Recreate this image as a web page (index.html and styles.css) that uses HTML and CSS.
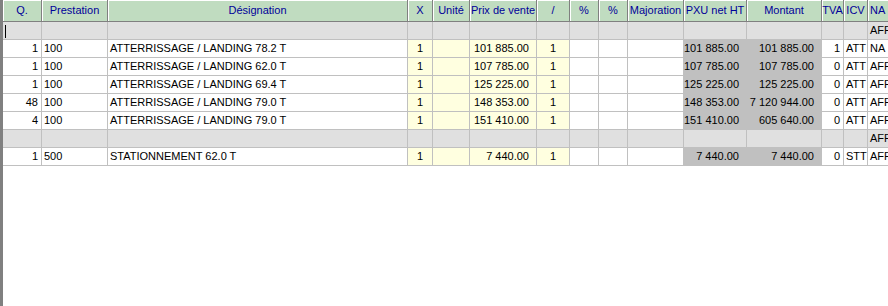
FILE: index.html
```html
<!DOCTYPE html>
<html lang="fr">
<head>
<meta charset="utf-8">
<title>Lignes de facture</title>
<link rel="stylesheet" href="styles.css">
</head>
<body>
<div class="frame">
  <div class="grid">
    <div class="row head">
      <div class="hd">Q.</div>
      <div class="hd">Prestation</div>
      <div class="hd">Désignation</div>
      <div class="hd">X</div>
      <div class="hd">Unité</div>
      <div class="hd">Prix de vente</div>
      <div class="hd">/</div>
      <div class="hd">%</div>
      <div class="hd">%</div>
      <div class="hd">Majoration</div>
      <div class="hd">PXU net HT</div>
      <div class="hd">Montant</div>
      <div class="hd">TVA</div>
      <div class="hd">ICV</div>
      <div class="hd hl">NA</div>
    </div>

    <div class="row sep">
      <div class="c"><span class="caret"></span></div>
      <div class="c"></div><div class="c"></div><div class="c"></div><div class="c"></div>
      <div class="c"></div><div class="c"></div><div class="c"></div><div class="c"></div>
      <div class="c"></div><div class="c"></div><div class="c"></div><div class="c"></div>
      <div class="c"></div><div class="c l">AFF</div>
    </div>

    <div class="row">
      <div class="c r">1</div><div class="c l">100</div><div class="c l">ATTERRISSAGE / LANDING 78.2 T</div>
      <div class="c y m">1</div><div class="c y"></div><div class="c y n">101 885.00</div><div class="c y m">1</div>
      <div class="c"></div><div class="c"></div><div class="c"></div>
      <div class="c g n">101 885.00</div><div class="c g n">101 885.00</div>
      <div class="c r">1</div><div class="c l">ATT</div><div class="c l">NA</div>
    </div>

    <div class="row">
      <div class="c r">1</div><div class="c l">100</div><div class="c l">ATTERRISSAGE / LANDING 62.0 T</div>
      <div class="c y m">1</div><div class="c y"></div><div class="c y n">107 785.00</div><div class="c y m">1</div>
      <div class="c"></div><div class="c"></div><div class="c"></div>
      <div class="c g n">107 785.00</div><div class="c g n">107 785.00</div>
      <div class="c r">0</div><div class="c l">ATT</div><div class="c l">AFF</div>
    </div>

    <div class="row">
      <div class="c r">1</div><div class="c l">100</div><div class="c l">ATTERRISSAGE / LANDING 69.4 T</div>
      <div class="c y m">1</div><div class="c y"></div><div class="c y n">125 225.00</div><div class="c y m">1</div>
      <div class="c"></div><div class="c"></div><div class="c"></div>
      <div class="c g n">125 225.00</div><div class="c g n">125 225.00</div>
      <div class="c r">0</div><div class="c l">ATT</div><div class="c l">AFF</div>
    </div>

    <div class="row">
      <div class="c r">48</div><div class="c l">100</div><div class="c l">ATTERRISSAGE / LANDING 79.0 T</div>
      <div class="c y m">1</div><div class="c y"></div><div class="c y n">148 353.00</div><div class="c y m">1</div>
      <div class="c"></div><div class="c"></div><div class="c"></div>
      <div class="c g n">148 353.00</div><div class="c g n">7 120 944.00</div>
      <div class="c r">0</div><div class="c l">ATT</div><div class="c l">AFF</div>
    </div>

    <div class="row">
      <div class="c r">4</div><div class="c l">100</div><div class="c l">ATTERRISSAGE / LANDING 79.0 T</div>
      <div class="c y m">1</div><div class="c y"></div><div class="c y n">151 410.00</div><div class="c y m">1</div>
      <div class="c"></div><div class="c"></div><div class="c"></div>
      <div class="c g n">151 410.00</div><div class="c g n">605 640.00</div>
      <div class="c r">0</div><div class="c l">ATT</div><div class="c l">AFF</div>
    </div>

    <div class="row sep">
      <div class="c"></div><div class="c"></div><div class="c"></div><div class="c"></div><div class="c"></div>
      <div class="c"></div><div class="c"></div><div class="c"></div><div class="c"></div>
      <div class="c"></div><div class="c"></div><div class="c"></div><div class="c"></div>
      <div class="c"></div><div class="c l">AFF</div>
    </div>

    <div class="row">
      <div class="c r">1</div><div class="c l">500</div><div class="c l">STATIONNEMENT 62.0 T</div>
      <div class="c y m">1</div><div class="c y"></div><div class="c y n">7 440.00</div><div class="c y m">1</div>
      <div class="c"></div><div class="c"></div><div class="c"></div>
      <div class="c g n">7 440.00</div><div class="c g n">7 440.00</div>
      <div class="c r">0</div><div class="c l">STT</div><div class="c l">AFF</div>
    </div>
  </div>
</div>
</body>
</html>
```
FILE: styles.css
```css
html, body {
  margin: 0;
  padding: 0;
  background: #ffffff;
}

body {
  width: 888px;
  height: 306px;
  overflow: hidden;
  font-family: "Liberation Sans", Arial, sans-serif;
  font-size: 11px;
  color: #000000;
}

.frame {
  height: 306px;
  border-left: 3px solid #808080;
  overflow: hidden;
  background: #ffffff;
}

.grid {
  width: 905px;
}

.row {
  display: grid;
  grid-template-columns: 39px 66px 300px 25px 37px 67px 33px 29px 29px 56px 63px 75px 22px 24px 40px;
  height: 18px;
}

.row.head {
  height: 22px;
}

.hd {
  box-sizing: border-box;
  background: #c0dcc0;
  border-right: 1px solid #808080;
  border-bottom: 1px solid #808080;
  box-shadow: inset 1px 1px 0 #ffffff;
  color: #000099;
  text-align: center;
  line-height: 21px;
  white-space: nowrap;
  overflow: hidden;
}

.hd.hl {
  text-align: left;
  padding-left: 2px;
}

.c {
  box-sizing: border-box;
  border-right: 1px solid #c0c0c0;
  border-bottom: 1px solid #c0c0c0;
  line-height: 17px;
  white-space: nowrap;
  overflow: hidden;
  background: #ffffff;
}

.sep .c {
  background: #e0e0e0;
}

.c.y {
  background: #ffffe0;
}

.c.g {
  background: #c0c0c0;
}

.c.r {
  text-align: right;
  padding-right: 3px;
}

.c.l {
  text-align: left;
  padding-left: 2px;
}

.c.m {
  text-align: center;
}

.c.n {
  text-align: right;
  padding-right: 7px;
}

.caret {
  display: inline-block;
  width: 1px;
  height: 13px;
  margin: 3px 0 0 2px;
  background: #000000;
  vertical-align: top;
}
```
